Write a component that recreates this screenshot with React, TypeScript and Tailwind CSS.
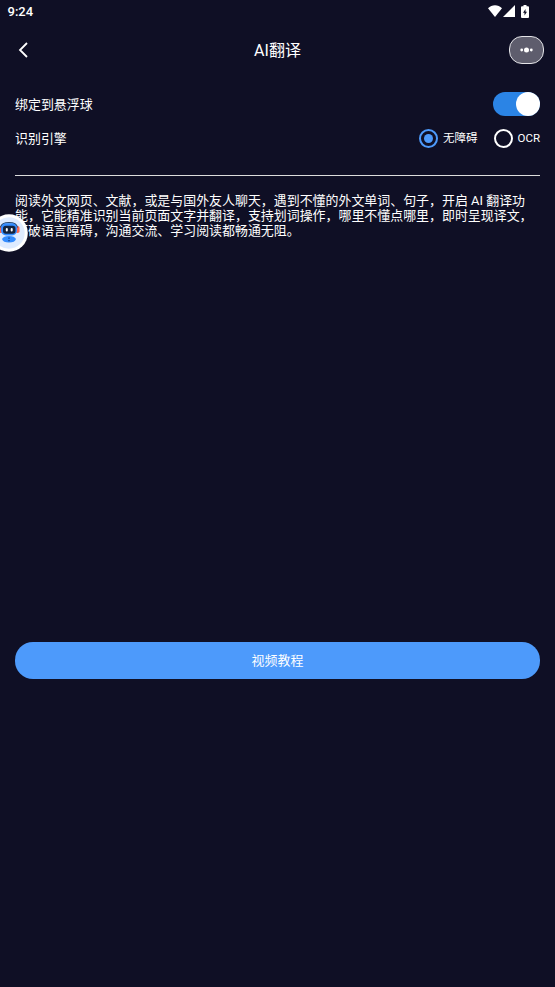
import { useState } from 'react'

const engines = [
  { id: 'a11y', label: '无障碍' },
  { id: 'ocr', label: 'OCR' },
]

function StatusBar() {
  return (
    <div className="flex h-[22px] items-center justify-between pl-[7.500px] pr-[26px]">
      <span className="pt-px text-[13px] leading-none font-medium">9:24</span>
      <div className="flex items-center">
        <svg className="h-[12px] w-[14px]" viewBox="0 0 14 12" fill="#fff">
          <path d="M7 12L0 3.2C2 1.2 4.3.2 7 .2s5 1 7 3z" />
        </svg>
        <svg className="ml-[1px] h-[12px] w-[12px]" viewBox="0 0 12 12" fill="#fff">
          <path d="M12 0v12H0z" />
        </svg>
        <svg className="ml-[6px] h-[13px] w-[8px]" viewBox="0 0 8 13">
          <path fill="#fff" d="M2.500 0h3v1.300H7q1 0 1 1V12q0 1-1 1H1q-1 0-1-1V2.300q0-1 1-1h1.500z" />
          <path fill="#0f0f25" d="M4.500 4L2 7.800h1.500v2.800L6 6.800H4.500z" />
        </svg>
      </div>
    </div>
  )
}

function Header() {
  return (
    <header className="grid h-[56px] grid-cols-3 items-center px-[11px]">
      <button aria-label="back" className="ml-[4px] w-[16px]">
        <svg className="block h-[16px] w-[16px]" viewBox="0 0 16 16" fill="none" stroke="#fff" strokeWidth="1.800">
          <path d="M12 1L5 8l7 7" />
        </svg>
      </button>
      <h1 className="pt-[2px] text-center text-[16px] leading-none">AI翻译</h1>
      <button
        aria-label="more"
        className="flex h-[28px] w-[35px] items-center justify-center justify-self-end rounded-[13px] border border-[#e4e4e8] bg-[#5e5d6d]"
      >
        <svg className="h-[6px] w-[13px]" viewBox="0 0 13 6" fill="#fff">
          <circle cx="1.700" cy="3" r="1.400" />
          <circle cx="6.500" cy="3" r="2.500" />
          <circle cx="11.300" cy="3" r="1.400" />
        </svg>
      </button>
    </header>
  )
}

// Assistant ball docked on the left edge
function FloatingBall() {
  return (
    <div className="absolute top-[214px] left-[-10px] h-[38px] w-[38px]">
      <svg viewBox="0 0 38 38" className="h-full w-full">
        <circle cx="19" cy="19" r="18.800" fill="#fff" />
        <circle cx="19" cy="19" r="15.700" fill="#deebff" />
        <rect x="8.500" y="12" width="4" height="7" rx="1.800" fill="#fb674f" />
        <rect x="25.500" y="12" width="4" height="7" rx="1.800" fill="#fb674f" />
        <path d="M10.500 13.500Q11.500 8.600 19 8.600t8.500 4.900" fill="none" stroke="#26466f" strokeWidth="1.200" />
        <rect x="11" y="9.300" width="16" height="12.200" rx="5" fill="#338cff" />
        <rect x="13" y="11.800" width="12.500" height="8" rx="2.800" fill="#14233e" />
        <rect x="15.800" y="14" width="2" height="3.600" rx="1" fill="#fff" />
        <rect x="20.700" y="14" width="2" height="3.600" rx="1" fill="#fff" />
        <path d="M12 25q1.500-3 7-3t7 3q-1 3.500-7 3.500t-7-3.500z" fill="#338cff" />
        <path d="M19 23.500v1.200M19 26v1.200" stroke="#14356b" strokeWidth="1.200" />
      </svg>
    </div>
  )
}

export default function App() {
  const [bound, setBound] = useState(true)
  const [engine, setEngine] = useState('a11y')

  return (
    <div className="relative flex h-[987px] w-[555px] flex-col overflow-hidden bg-[#0f0f25] font-[Roboto,'Noto_Sans_CJK_SC',sans-serif] text-white">
      <StatusBar />
      <Header />

      <main className="px-[15px] pt-[9px] text-[12.95px]">
        <div className="flex h-[34px] items-center justify-between">
          <span className="pt-[2px] leading-none">绑定到悬浮球</span>
          <button
            role="switch"
            aria-checked={bound}
            onClick={() => setBound(!bound)}
            className={`flex h-[24px] w-[47px] items-center rounded-full ${bound ? 'justify-end bg-[#2b84e5]' : 'justify-start bg-[#5e5d6d]'}`}
          >
            <span className="h-[24px] w-[24px] rounded-full bg-white" />
          </button>
        </div>

        <div className="flex h-[34px] items-center justify-between">
          <span className="pt-[2px] leading-none">识别引擎</span>
          <div className="flex gap-[16px]">
            {engines.map((item) => (
              <button key={item.id} onClick={() => setEngine(item.id)} className="flex items-center gap-[5px]">
                <span
                  className={`flex h-[19px] w-[19px] items-center justify-center rounded-full border-2 ${engine === item.id ? 'border-[#4d9afb]' : 'border-white'}`}
                >
                  {engine === item.id && <span className="h-[9px] w-[9px] rounded-full bg-[#4d9afb]" />}
                </span>
                <span className="pt-[2px] text-[11.500px] leading-none">{item.label}</span>
              </button>
            ))}
          </div>
        </div>

        <div className="mt-[20px] h-px bg-[#dcdcdc]" />

        <p className="mt-[18px] leading-[14.8px]">
          阅读外文网页、文献，或是与国外友人聊天，遇到不懂的外文单词、句子，开启 AI 翻译功能，它能精准识别当前页面文字并翻译，支持划词操作，哪里不懂点哪里，即时呈现译文，打破语言障碍，沟通交流、学习阅读都畅通无阻。
        </p>
      </main>

      <button className="mx-[15px] mt-auto mb-[308.500px] h-[37px] rounded-[18px] bg-[#4d9afb] pt-[2px] text-[12.95px] leading-none">
        视频教程
      </button>

      <FloatingBall />
    </div>
  )
}
